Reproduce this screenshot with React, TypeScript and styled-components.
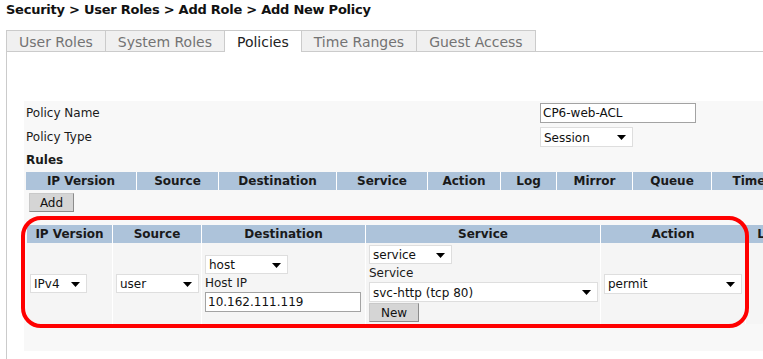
import React from 'react'
import styled, { createGlobalStyle } from 'styled-components'

const GlobalStyle = createGlobalStyle`
  *, *::before, *::after { box-sizing: border-box; }
  html, body { margin: 0; padding: 0; background: #fff; overflow: hidden; }
  body {
    font-family: "DejaVu Sans", Verdana, sans-serif;
    font-size: 12px;
    color: #1a1a1a;
  }
`

const FONT = `"DejaVu Sans", Verdana, sans-serif`

const Page = styled.div`
  width: 763px;
  height: 359px;
  overflow: hidden;
`

const Crumbs = styled.h1`
  margin: 0;
  padding-left: 6px;
  height: 30px;
  line-height: 20px;
  font-size: 13px;
  letter-spacing: -0.25px;
  font-weight: bold;
  color: #111;
  white-space: nowrap;
`

const TabBar = styled.div`
  display: flex;
  margin-left: 6px;
  height: 22px;
  border-bottom: 1px solid #cbcbcb;
`

const Tab = styled.div<{ $active?: boolean; $first?: boolean }>`
  height: ${p => (p.$active ? 22 : 21)}px;
  padding: 1px 12px 0;
  line-height: 20px;
  font-size: 14px;
  white-space: nowrap;
  color: ${p => (p.$active ? '#222' : '#737373')};
  background: ${p => (p.$active ? '#fff' : '#f0f0f0')};
  border-top: 1px solid #cbcbcb;
  border-right: 1px solid #cbcbcb;
  border-left: ${p => (p.$first ? '1px solid #cbcbcb' : 'none')};
`

const Panel = styled.div`
  margin-left: 6px;
  border-left: 1px solid #cbcbcb;
  padding: 49px 0 0 17px;
  height: 320px;
`

const FormBox = styled.div`
  width: 820px;
  background: #f8f8f8;
  padding: 2px 0 27px 2px;
`

const FieldGrid = styled.div`
  display: grid;
  grid-template-columns: 514px 200px;
  grid-auto-rows: 20px;
  row-gap: 4px;
  align-items: center;
`

const Label = styled.div`
  font-size: 12px;
  line-height: 17px;
  padding-top: 1px;
  white-space: nowrap;
`

const SectionTitle = styled.div`
  margin-top: 3px;
  height: 20px;
  line-height: 21px;
  font-weight: bold;
`

const TextInput = styled.input<{ $w: number; $h?: number }>`
  width: ${p => p.$w}px;
  height: ${p => p.$h ?? 20}px;
  border: 1px solid #a3a3a3;
  background: #fff;
  padding: 0 2px;
  font: 12px ${FONT};
  color: #111;
  outline: none;
`

const SelectWrap = styled.div<{ $w: number; $h?: number }>`
  position: relative;
  width: ${p => p.$w}px;
  height: ${p => p.$h ?? 19}px;
  flex-shrink: 0;
`

const NativeSelect = styled.select`
  appearance: none;
  -webkit-appearance: none;
  width: 100%;
  height: 100%;
  border: 1px solid #dedede;
  border-radius: 0;
  background: #fff;
  padding: 1px 0 0 3px;
  font: 12px ${FONT};
  color: #111;
  outline: none;
`

const Arrow = styled.svg`
  position: absolute;
  right: 7px;
  top: 50%;
  margin-top: -2px;
  pointer-events: none;
`

const Button = styled.button<{ $w: number }>`
  width: ${p => p.$w}px;
  height: 19px;
  padding: 1px 0 0;
  font: 12px ${FONT};
  color: #111;
  background: #d5d5d5;
  border: 1px solid;
  border-color: #c9c9c9 #8c8c8c #8c8c8c #c9c9c9;
  border-radius: 0;
`

const Table = styled.div<{ $cols: string }>`
  display: grid;
  grid-template-columns: ${p => p.$cols};
  width: max-content;
`

const HeadCell = styled.div`
  height: 18px;
  line-height: 19px;
  background: #adc3da;
  border-right: 1px solid #fff;
  font-weight: bold;
  text-align: center;
  white-space: nowrap;
  overflow: hidden;
`

const BodyCell = styled.div<{ $center?: boolean }>`
  background: #f5f5f5;
  border-right: 1px solid #fff;
  padding: 2px 3px;
  display: flex;
  flex-direction: column;
  justify-content: center;
  align-items: ${p => (p.$center ? 'center' : 'flex-start')};
`

const AddRow = styled.div`
  margin: 3px 0 0 3px;
`

const EditArea = styled.div`
  position: relative;
  margin: 13px 0 0 1px;
  width: max-content;
`

const RedFrame = styled.div`
  position: absolute;
  left: -6px;
  top: -9px;
  width: 728px;
  height: 112px;
  border: 4px solid #ff0000;
  border-radius: 20px;
  pointer-events: none;
`

const Check = styled.span`
  display: block;
  width: 14px;
  height: 14px;
  border: 1px solid #8a8a8a;
  border-radius: 2px;
  background: #fff;
`

const Spacer = styled.div<{ $h: number }>`
  height: ${p => p.$h}px;
`

const Select: React.FC<{ w: number; h?: number; value: string }> = ({ w, h, value }) => (
  <SelectWrap $w={w} $h={h}>
    <NativeSelect defaultValue={value}>
      <option>{value}</option>
    </NativeSelect>
    <Arrow width="9" height="5" viewBox="0 0 9 5">
      <path d="M0 0H9L4.5 5Z" fill="#000" />
    </Arrow>
  </SelectWrap>
)

const tabs = ['User Roles', 'System Roles', 'Policies', 'Time Ranges', 'Guest Access']

const ruleCols = [
  ['IP Version', 111],
  ['Source', 82],
  ['Destination', 118],
  ['Service', 91],
  ['Action', 73],
  ['Log', 56],
  ['Mirror', 76],
  ['Queue', 79],
  ['Time', 75],
  ['Black List', 90],
] as const

const editCols = [
  ['IP Version', 86],
  ['Source', 89],
  ['Destination', 164],
  ['Service', 235],
  ['Action', 145],
  ['Log', 48],
  ['Mirror', 80],
] as const

const toCols = (cols: ReadonlyArray<readonly [string, number]>) => cols.map(c => `${c[1]}px`).join(' ')

export default function App() {
  return (
    <Page>
      <GlobalStyle />
      <Crumbs>Security &gt; User Roles &gt; Add Role &gt; Add New Policy</Crumbs>
      <TabBar>
        {tabs.map((t, i) => (
          <Tab key={t} $active={i === 2} $first={i === 0}>
            {t}
          </Tab>
        ))}
      </TabBar>
      <Panel>
        <FormBox>
          <FieldGrid>
            <Label>Policy Name</Label>
            <TextInput $w={156} defaultValue="CP6-web-ACL" />
            <Label>Policy Type</Label>
            <Select w={93} h={20} value="Session" />
          </FieldGrid>
          <SectionTitle>Rules</SectionTitle>
          <Spacer $h={2} />
          <Table $cols={toCols(ruleCols)}>
            {ruleCols.map(([name]) => (
              <HeadCell key={name}>{name}</HeadCell>
            ))}
          </Table>
          <AddRow>
            <Button $w={45}>Add</Button>
          </AddRow>
          <EditArea>
            <Table $cols={toCols(editCols)}>
              {editCols.map(([name]) => (
                <HeadCell key={name}>{name}</HeadCell>
              ))}
              <BodyCell>
                <Select w={57} value="IPv4" />
              </BodyCell>
              <BodyCell>
                <Select w={83} value="user" />
              </BodyCell>
              <BodyCell>
                <Select w={83} value="host" />
                <Label>Host IP</Label>
                <TextInput $w={156} defaultValue="10.162.111.119" />
              </BodyCell>
              <BodyCell>
                <Select w={83} value="service" />
                <Label>Service</Label>
                <Select w={229} h={20} value="svc-http (tcp 80)" />
                <Spacer $h={1} />
                <Button $w={50}>New</Button>
              </BodyCell>
              <BodyCell>
                <Select w={138} h={20} value="permit" />
              </BodyCell>
              <BodyCell $center>
                <Check />
              </BodyCell>
              <BodyCell />
            </Table>
            <RedFrame />
          </EditArea>
        </FormBox>
      </Panel>
    </Page>
  )
}
